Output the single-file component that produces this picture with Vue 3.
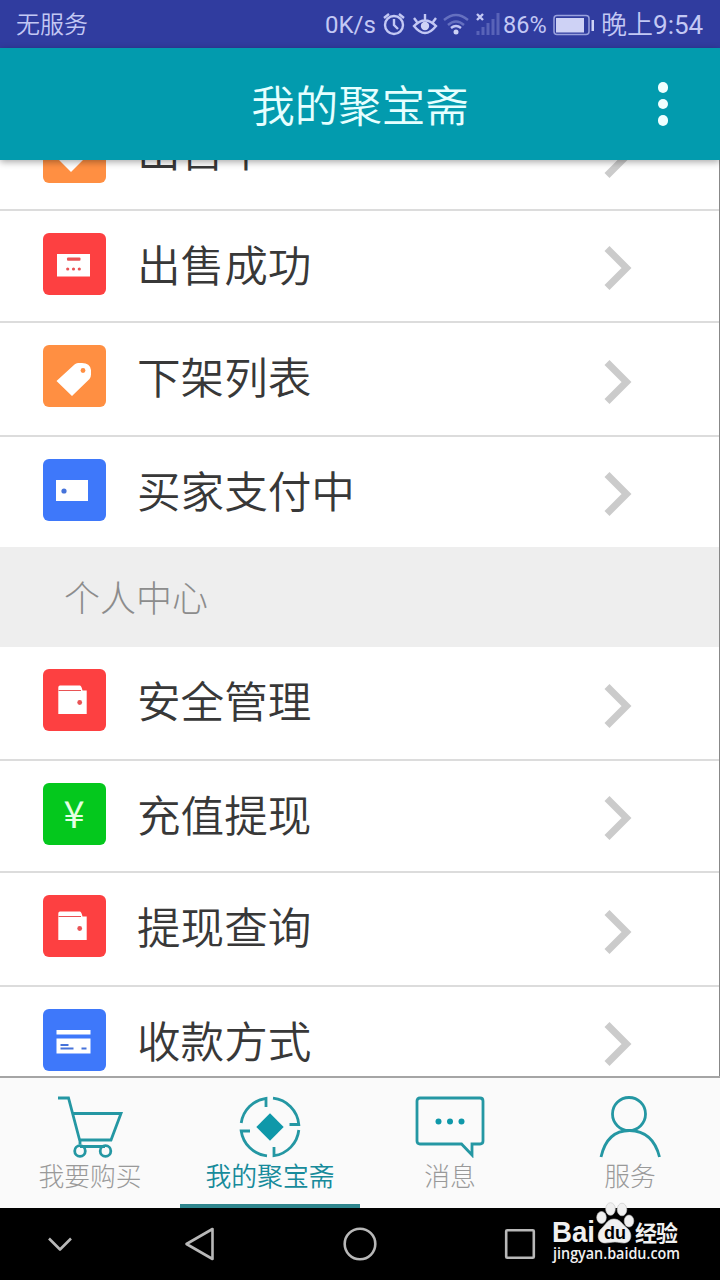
<script setup>
import { ref } from "vue";

const activeTab = ref("mine");

const tradeRows = [
  { label: "出售中", icon: "down", color: "orange" },
  { label: "出售成功", icon: "receipt", color: "red" },
  { label: "下架列表", icon: "tag", color: "orange", tall: true },
  { label: "买家支付中", icon: "ticket", color: "blue", last: true },
];

const personalRows = [
  { label: "安全管理", icon: "wallet", color: "red", tall: true },
  { label: "充值提现", icon: "yen", color: "green" },
  { label: "提现查询", icon: "wallet", color: "red", tall: true },
  { label: "收款方式", icon: "card", color: "blue" },
];

const groups = [
  { title: "", rows: tradeRows },
  { title: "个人中心", rows: personalRows },
];

const tabs = [
  { id: "buy", label: "我要购买" },
  { id: "mine", label: "我的聚宝斋" },
  { id: "message", label: "消息" },
  { id: "service", label: "服务" },
];
</script>
<template>
  <div class="screen">
    <div class="status">
      <span class="carrier">无服务</span>
      <span class="speed">0K/s</span>
      <svg class="status-icons" width="128" height="48" viewBox="0 0 128 48">
        <!-- alarm -->
        <g class="line">
          <circle cx="19" cy="25" r="9" />
          <path d="M19 19v6l4 4M9 18l5-4M29 18l-5-4" />
        </g>
        <!-- eye care -->
        <g class="line">
          <path d="M39 26q11-11 22 0q-11 14-22 0zM50 20v-6M42 22l-3-4M58 22l3-4" />
        </g>
        <circle class="solid" cx="50" cy="26" r="4.2" />
        <!-- wifi -->
        <g class="line">
          <path class="faint" d="M69 20q12-10 24 0" />
          <path class="faint" d="M73 25q8-7 16 0" />
          <path d="M76 28q5-4 10 0" />
        </g>
        <circle class="solid" cx="81" cy="32" r="2.5" />
        <!-- signal -->
        <path class="line" d="M102 14l6 6M108 14l-6 6" />
        <path class="bars" d="M103 35v-4M108 35v-8M113 35v-12M118 35v-16M123 35v-22" />
      </svg>
      <span class="percent">86%</span>
      <svg class="battery" width="42" height="48" viewBox="0 0 42 48">
        <rect class="shell" x="1" y="15.500" width="35" height="19" rx="3" />
        <rect class="solid" x="3" y="18" width="28" height="14.500" />
        <rect class="solid" x="38.500" y="20" width="2.500" height="11" />
      </svg>
      <span class="time"><span>晚上</span>9:54</span>
    </div>

    <header class="header">
      <h1>我的聚宝斋</h1>
      <div class="more"><i></i><i></i><i></i></div>
    </header>

    <main class="list">
      <section v-for="group in groups" :key="group.title">
        <h2 v-if="group.title">{{ group.title }}</h2>
        <div
          v-for="row in group.rows"
          :key="row.label"
          class="row"
          :class="{ tall: row.tall, last: row.last }"
        >
          <svg class="tile" :class="row.color" viewBox="0 0 63 62">
            <path v-if="row.icon === 'down'" d="M28 51L12 35L28 19L44 35z" />
            <g v-else-if="row.icon === 'receipt'">
              <rect x="14" y="21" width="33" height="22.500" />
              <rect class="cut" x="24" y="24.500" width="13.500" height="3.200" rx="1" />
              <circle class="cut" cx="24.700" cy="36" r="1.600" />
              <circle class="cut" cx="30.500" cy="36" r="1.600" />
              <circle class="cut" cx="36.300" cy="36" r="1.600" />
            </g>
            <g v-else-if="row.icon === 'tag'">
              <path d="M13.500 36L29 51L46.500 34Q48 32 48 29.500V25Q47 18 39 18H35Q33 18 31.500 19.500z" />
              <circle class="cut" cx="40" cy="25.500" r="2.400" />
            </g>
            <g v-else-if="row.icon === 'ticket'">
              <rect x="13" y="21" width="32" height="21" />
              <circle class="cut" cx="21" cy="32" r="2.600" />
            </g>
            <g v-else-if="row.icon === 'wallet'">
              <path d="M15.300 18.500Q15.300 16.500 17 16.500H37Q38.500 17 39.500 21.500H43.700V45H15.300z" />
              <path class="seam" d="M15.500 21.500H38" />
              <circle class="cut" cx="36.700" cy="33.500" r="2.400" />
            </g>
            <text v-else-if="row.icon === 'yen'" x="31" y="44.500">¥</text>
            <g v-else-if="row.icon === 'card'">
              <rect x="13.500" y="21" width="34" height="4.500" />
              <rect x="13.500" y="29.500" width="34" height="15" />
              <path class="marks" d="M17.500 36h8M17.500 39.500h13M38.500 39.500h5" />
            </g>
          </svg>
          <span class="label">{{ row.label }}</span>
          <svg class="arrow" width="30" height="48" viewBox="0 0 30 48">
            <path d="M4 4.500L23.500 24L4 43.500" />
          </svg>
        </div>
      </section>
    </main>

    <nav class="tabs">
      <div
        v-for="tab in tabs"
        :key="tab.id"
        class="tab"
        :class="{ active: activeTab === tab.id }"
        @click="activeTab = tab.id"
      >
        <svg width="70" height="62" viewBox="0 0 70 62">
          <g v-if="tab.id === 'buy'">
            <path d="M3 2H13.500L25 45.500M17.500 17.500H66L56 44H24.500M25 44v4.500M25 50.500H50" />
            <circle cx="25" cy="55" r="5.300" />
            <circle cx="50.500" cy="55" r="5.300" />
          </g>
          <g v-else-if="tab.id === 'mine'">
            <path
              d="M6.200 27A29 29 0 0 1 31 2.300V11M38 2.200A29 29 0 0 1 63.800 28.500H54.500M63.800 34A29 29 0 0 1 39 59.700V51M32 59.800A29 29 0 0 1 6.200 35H15"
            />
            <path class="fill" d="M35 17.300L48.700 31L35 44.700L21.300 31z" />
          </g>
          <g v-else-if="tab.id === 'message'">
            <path d="M5 2H65Q68 2 68 5V45Q68 48 65 48H57V59L46.500 48H5Q2 48 2 45V5Q2 2 5 2z" />
            <circle class="fill" cx="23.500" cy="25.500" r="3" />
            <circle class="fill" cx="35" cy="25.500" r="3" />
            <circle class="fill" cx="46.500" cy="25.500" r="3" />
          </g>
          <g v-else>
            <circle cx="34" cy="18" r="16.500" />
            <path d="M6 61Q12 34.500 34.500 34.500Q58 35 64.500 61" />
          </g>
        </svg>
        <span>{{ tab.label }}</span>
      </div>
    </nav>

    <footer class="navbar">
      <svg width="36" height="36" viewBox="0 0 36 36"><path d="M7 12.500L18 23.500L29 12.500" /></svg>
      <svg width="36" height="36" viewBox="0 0 36 36"><path d="M4.500 18L30.500 3V33z" /></svg>
      <svg width="36" height="36" viewBox="0 0 36 36"><circle cx="18" cy="18" r="15.300" /></svg>
      <svg width="36" height="36" viewBox="0 0 36 36"><rect x="4.200" y="4.200" width="27.600" height="27.600" rx="1" /></svg>
    </footer>

    <svg class="watermark" width="136" height="70" viewBox="0 0 136 70">
      <text class="bai" x="3" y="42" textLength="43" lengthAdjust="spacingAndGlyphs">Bai</text>
      <g class="paw">
        <ellipse cx="52.500" cy="17.500" rx="4.800" ry="6" />
        <ellipse cx="61.500" cy="9" rx="4.800" ry="6.300" />
        <ellipse cx="73" cy="9.500" rx="4.800" ry="6.300" />
        <ellipse cx="80" cy="21" rx="4.800" ry="6" />
        <path d="M65 19C71 19 73 24 78 28C84 33 83 43 75 43C71 43 70 42 66 42C62 42 60 43 56 43C48 43 47 33 53 28C57 24 59 19 65 19z" />
      </g>
      <text class="du" x="55" y="39" textLength="22" lengthAdjust="spacingAndGlyphs">du</text>
      <text class="jingyan" x="86" y="41" textLength="43">经验</text>
      <text class="url" x="4" y="59" textLength="127" lengthAdjust="spacingAndGlyphs">jingyan.baidu.com</text>
    </svg>
  </div>
</template>
<style>
body {
  background: #000;
}
</style>
<style scoped>
.screen {
  position: relative;
  display: flex;
  flex-direction: column;
  width: 720px;
  height: 1280px;
  overflow: hidden;
  background: #fff;
  font-family: "Noto Sans CJK SC", sans-serif;
  font-weight: 350;
}
.status {
  display: flex;
  align-items: center;
  height: 48px;
  padding: 0 16px;
  flex: none;
  background: #303c9f;
  color: #c3c8f4;
  font-family: Roboto, "Noto Sans CJK SC", sans-serif;
  font-size: 24px;
  font-weight: 400;
  line-height: 48px;
  white-space: nowrap;
}
.status > span {
  padding-top: 2px;
}
.carrier {
  width: 309px;
  font-weight: 350;
}
.speed {
  width: 50px;
}
.status-icons {
  flex: none;
}
.percent {
  width: 50px;
  font-size: 23.5px;
}
.battery {
  flex: none;
}
.time {
  margin-left: 6px;
  font-size: 26px;
}
.time span {
  font-weight: 350;
}
.line {
  fill: none;
  stroke: #c3c8f4;
  stroke-width: 2.4;
}
.line .faint {
  stroke: #6570c0;
}
.solid {
  fill: #ced2f5;
}
.bars {
  stroke: #5963b8;
  stroke-width: 3;
}
.shell {
  fill: none;
  stroke: #99a1dd;
  stroke-width: 1.5;
}
.header {
  position: relative;
  z-index: 1;
  display: grid;
  grid-template-columns: 114px 1fr 114px;
  align-items: center;
  height: 112px;
  flex: none;
  background: #029bae;
  box-shadow: 0 2px 7px rgba(0, 0, 0, 0.35);
  color: #e6ffff;
}
h1 {
  grid-column: 2;
  margin: 0;
  font-size: 43.5px;
  font-weight: 350;
  line-height: 60px;
  text-align: center;
}
.more {
  display: grid;
  gap: 6px;
  justify-content: center;
}
.more i {
  width: 10.5px;
  height: 10.5px;
  border-radius: 50%;
  background: #efffff;
}
.list {
  height: 916px;
  flex: none;
  box-sizing: border-box;
  overflow: hidden;
  border-right: 1px solid #888;
}
.list section:first-child {
  margin-top: -61px;
}
h2 {
  height: 100px;
  margin: 0;
  padding-left: 64px;
  background: #eee;
  color: #8c8c8c;
  font-size: 36px;
  font-weight: 300;
  line-height: 98px;
}
.row {
  display: flex;
  align-items: flex-start;
  box-sizing: border-box;
  height: 112px;
  padding: 22px 86px 0 43px;
  border-bottom: 2px solid #dcdcdc;
}
.row.tall {
  height: 114px;
}
.row.last {
  height: 110px;
  border-bottom: 0;
}
.tile {
  width: 63px;
  height: 62px;
  border-radius: 6px;
  fill: #fff;
}
.orange {
  background: #ff8f42;
  color: #ff8f42;
}
.red {
  background: #fd4041;
  color: #e95355;
}
.blue {
  background: #3e78fa;
  color: #4673da;
}
.green {
  background: #04c81d;
}
.tile .cut {
  fill: currentColor;
}
.tile .seam,
.tile .marks {
  fill: none;
  stroke: currentColor;
  stroke-width: 1;
}
.tile .marks {
  stroke-width: 1.8;
}
.tile text {
  fill: #e3ffe3;
  font-family: "Noto Sans CJK SC", sans-serif;
  font-size: 38px;
  font-weight: 400;
  text-anchor: middle;
}
.label {
  flex: 1;
  margin-left: 31px;
  color: #383838;
  font-size: 43.6px;
  line-height: 60px;
}
.row:first-child .label {
  line-height: 54px;
}
.arrow {
  margin: 11px 0 0;
  fill: none;
  stroke: #cbcbcb;
  stroke-width: 7;
}
.tall .arrow {
  margin-top: 13px;
}
.tabs {
  display: grid;
  grid-template-columns: repeat(4, 1fr);
  height: 132px;
  flex: none;
  box-sizing: border-box;
  border-top: 2px solid #a5a5a5;
  background: #fafafa;
}
.tab {
  display: flex;
  flex-direction: column;
  align-items: center;
  box-sizing: border-box;
  padding-top: 18px;
  border-bottom: 4px solid transparent;
  color: #999;
  font-size: 25.8px;
  font-weight: 300;
  line-height: 34px;
}
.tab.active {
  border-color: #2f868e;
  color: #178b9b;
  font-weight: 350;
}
.tab svg {
  flex: none;
  fill: none;
  stroke: #2497a3;
  stroke-width: 2.8;
}
.tab .fill {
  fill: #0f98a9;
  stroke: none;
}
.navbar {
  display: grid;
  grid-template-columns: 120px 160px 160px 160px;
  align-items: center;
  justify-items: center;
  height: 72px;
  flex: none;
  background: #000;
}
.navbar svg {
  fill: none;
  stroke: #b8b8b8;
  stroke-width: 2.6;
  stroke-linejoin: round;
}
.watermark {
  position: absolute;
  left: 549px;
  top: 1200px;
  fill: #f0f0f0;
}
.paw {
  stroke: #c4c4c4;
  stroke-width: 0.6;
}
.bai {
  font: bold 29px "Liberation Sans", sans-serif;
}
.du {
  fill: #000;
  font: bold 19px "Liberation Sans", sans-serif;
}
.jingyan {
  font-size: 22px;
  font-weight: 700;
}
.url {
  font: 600 16px "Open Sans", sans-serif;
}
</style>
